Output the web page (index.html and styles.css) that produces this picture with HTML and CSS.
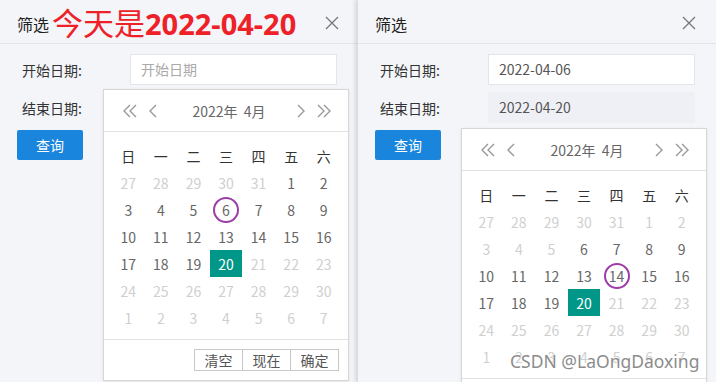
FILE: index.html
```html
<!DOCTYPE html>
<html lang="zh">
<head>
  <meta charset="UTF-8">
  <title>筛选</title>
  <link rel="stylesheet" href="styles.css">
</head>
<body>
  <div class="page">
    <!-- 左侧：选择开始日期 -->
    <section class="panel">
      <header class="panel-head">
        <span class="panel-title">筛选</span>
        <span class="today">今天是<b>2022-04-20</b></span>
        <span class="close">
          <svg width="14" height="14" viewBox="0 0 14 14"><path d="M1 1L13 13M13 1L1 13" stroke="#777" stroke-width="1.3" fill="none"/></svg>
        </span>
      </header>
      <div class="panel-body">
        <div class="form-row">
          <label>开始日期:</label>
          <div class="field placeholder">开始日期</div>
        </div>
        <div class="form-row">
          <label>结束日期:</label>
        </div>
        <button class="btn">查询</button>
      </div>

      <div class="laydate laydate-left">
        <div class="ld-head">
          <span class="ld-nav">
            <svg width="16" height="14" viewBox="0 0 16 14"><path d="M8 1L2 7L8 13M14 1L8 7L14 13" stroke="#999" stroke-width="1.4" fill="none"/></svg>
            <svg width="8" height="14" viewBox="0 0 8 14"><path d="M7 1L1 7L7 13" stroke="#999" stroke-width="1.4" fill="none"/></svg>
          </span>
          <span class="ld-title">2022年&nbsp;&nbsp;4月</span>
          <span class="ld-nav">
            <svg width="8" height="14" viewBox="0 0 8 14"><path d="M1 1L7 7L1 13" stroke="#999" stroke-width="1.4" fill="none"/></svg>
            <svg width="16" height="14" viewBox="0 0 16 14"><path d="M2 1L8 7L2 13M8 1L14 7L8 13" stroke="#999" stroke-width="1.4" fill="none"/></svg>
          </span>
        </div>
        <div class="ld-body">
          <div class="ld-grid">
            <span class="wk">日</span><span class="wk">一</span><span class="wk">二</span><span class="wk">三</span><span class="wk">四</span><span class="wk">五</span><span class="wk">六</span>
            <span class="off">27</span><span class="off">28</span><span class="off">29</span><span class="off">30</span><span class="off">31</span><span>1</span><span>2</span>
            <span>3</span><span>4</span><span>5</span><span class="mark">6</span><span>7</span><span>8</span><span>9</span>
            <span>10</span><span>11</span><span>12</span><span>13</span><span>14</span><span>15</span><span>16</span>
            <span>17</span><span>18</span><span>19</span><span class="on">20</span><span class="off">21</span><span class="off">22</span><span class="off">23</span>
            <span class="off">24</span><span class="off">25</span><span class="off">26</span><span class="off">27</span><span class="off">28</span><span class="off">29</span><span class="off">30</span>
            <span class="off">1</span><span class="off">2</span><span class="off">3</span><span class="off">4</span><span class="off">5</span><span class="off">6</span><span class="off">7</span>
          </div>
        </div>
        <div class="ld-foot">
          <div class="ld-btns"><span>清空</span><span>现在</span><span>确定</span></div>
        </div>
      </div>
    </section>

    <!-- 右侧：选择结束日期 -->
    <section class="panel panel-right">
      <header class="panel-head">
        <span class="panel-title">筛选</span>
        <span class="close">
          <svg width="14" height="14" viewBox="0 0 14 14"><path d="M1 1L13 13M13 1L1 13" stroke="#777" stroke-width="1.3" fill="none"/></svg>
        </span>
      </header>
      <div class="panel-body">
        <div class="form-row">
          <label>开始日期:</label>
          <div class="field">2022-04-06</div>
        </div>
        <div class="form-row">
          <label>结束日期:</label>
          <div class="field field-active">2022-04-20</div>
        </div>
        <button class="btn">查询</button>
      </div>

      <div class="laydate laydate-right">
        <div class="ld-head">
          <span class="ld-nav">
            <svg width="16" height="14" viewBox="0 0 16 14"><path d="M8 1L2 7L8 13M14 1L8 7L14 13" stroke="#999" stroke-width="1.4" fill="none"/></svg>
            <svg width="8" height="14" viewBox="0 0 8 14"><path d="M7 1L1 7L7 13" stroke="#999" stroke-width="1.4" fill="none"/></svg>
          </span>
          <span class="ld-title">2022年&nbsp;&nbsp;4月</span>
          <span class="ld-nav">
            <svg width="8" height="14" viewBox="0 0 8 14"><path d="M1 1L7 7L1 13" stroke="#999" stroke-width="1.4" fill="none"/></svg>
            <svg width="16" height="14" viewBox="0 0 16 14"><path d="M2 1L8 7L2 13M8 1L14 7L8 13" stroke="#999" stroke-width="1.4" fill="none"/></svg>
          </span>
        </div>
        <div class="ld-body">
          <div class="ld-grid">
            <span class="wk">日</span><span class="wk">一</span><span class="wk">二</span><span class="wk">三</span><span class="wk">四</span><span class="wk">五</span><span class="wk">六</span>
            <span class="off">27</span><span class="off">28</span><span class="off">29</span><span class="off">30</span><span class="off">31</span><span class="off">1</span><span class="off">2</span>
            <span class="off">3</span><span class="off">4</span><span class="off">5</span><span>6</span><span>7</span><span>8</span><span>9</span>
            <span>10</span><span>11</span><span>12</span><span>13</span><span class="mark">14</span><span>15</span><span>16</span>
            <span>17</span><span>18</span><span>19</span><span class="on">20</span><span class="off">21</span><span class="off">22</span><span class="off">23</span>
            <span class="off">24</span><span class="off">25</span><span class="off">26</span><span class="off">27</span><span class="off">28</span><span class="off">29</span><span class="off">30</span>
            <span class="off">1</span><span class="off">2</span><span class="off">3</span><span class="off">4</span><span class="off">5</span><span class="off">6</span><span class="off">7</span>
          </div>
        </div>
        <div class="ld-foot"></div>
      </div>

      <div class="watermark">CSDN @LaOngDaoxing</div>
    </section>
  </div>
</body>
</html>
```

FILE: styles.css
```css
html, body {
  margin: 0;
  padding: 0;
  height: 100%;
  overflow: hidden;
}

body {
  font-family: "Noto Sans CJK SC", "Noto Sans", sans-serif;
  font-size: 14px;
  color: #333;
  background: #f4f5f9;
}

.page {
  display: flex;
  height: 382px;
}

.panel {
  position: relative;
  width: 357px;
  background: #f4f5f9;
}

.panel-right {
  width: 359px;
  box-shadow: -2px 0 4px rgba(0, 0, 0, 0.12);
  border-left: 1px solid #dcdde2;
  box-sizing: border-box;
}

.panel-head {
  display: flex;
  align-items: center;
  height: 44px;
  padding: 0 18px 0 17px;
  border-bottom: 1px solid #e3e5eb;
  box-sizing: border-box;
}

.panel-title {
  font-size: 16px;
  color: #222;
  line-height: 1;
  padding-top: 4px;
}

.today {
  color: #ee2128;
  font-size: 31px;
  line-height: 1;
  margin-left: 3px;
}

.today b {
  font-size: 29px;
  font-weight: bold;
  font-family: "Noto Sans", sans-serif;
}

.close {
  margin-left: auto;
  display: flex;
  padding-top: 2px;
}

.panel-right .close {
  padding-right: 2px;
}

.panel-body {
  padding: 10px 0 0 17px;
}

.form-row {
  display: flex;
  align-items: center;
  height: 31px;
  margin-bottom: 7px;
}

.form-row label {
  width: 108px;
  padding-left: 5px;
  font-size: 14px;
  color: #333;
}

.field {
  width: 207px;
  height: 31px;
  box-sizing: border-box;
  border: 1px solid #e2e5ee;
  background: #fff;
  padding-left: 10px;
  line-height: 29px;
  font-size: 14px;
  color: #555;
}

.field.placeholder {
  color: #aaa;
}

.field-active {
  background: #eef0f6;
  border-color: #eef0f6;
}

.btn {
  display: block;
  width: 66px;
  height: 30px;
  margin-top: 1px;
  border: none;
  border-radius: 2px;
  background: #1a85dc;
  color: #fff;
  font-family: "Noto Sans CJK SC", sans-serif;
  font-size: 14px;
  cursor: pointer;
}

/* 日期选择弹层 */
.laydate {
  position: absolute;
  left: 103px;
  width: 246px;
  background: #fff;
  border: 1px solid #d6d6d6;
  box-sizing: border-box;
  box-shadow: 0 1px 3px rgba(0, 0, 0, 0.08);
}

.laydate-left {
  top: 89px;
}

.laydate-right {
  top: 128px;
}

.ld-head {
  display: flex;
  align-items: center;
  justify-content: space-between;
  height: 41px;
  padding: 0 16px 0 18px;
  border-bottom: 1px solid #e2e2e2;
}

.ld-nav {
  display: flex;
  align-items: center;
  gap: 11px;
}

.ld-title {
  color: #666;
  font-size: 14px;
  padding-left: 4px;
}

.ld-body {
  padding: 10px 8px 8px;
}

.ld-grid {
  display: grid;
  grid-template-columns: repeat(7, 1fr);
  grid-auto-rows: 27px;
}

.ld-grid span {
  position: relative;
  display: flex;
  align-items: center;
  justify-content: center;
  color: #666;
  font-size: 14px;
}

.ld-grid .wk {
  color: #333;
}

.ld-grid .off {
  color: #cfcfcf;
}

.ld-grid .on {
  background: #009688;
  color: #fff;
}

.ld-grid .mark::after {
  content: "";
  position: absolute;
  left: 50%;
  top: 50%;
  width: 22px;
  height: 22px;
  margin: -13px 0 0 -13px;
  border: 2px solid #9d3ea8;
  border-radius: 50%;
}

.ld-foot {
  height: 40px;
  border-top: 1px solid #e2e2e2;
  display: flex;
  align-items: center;
  justify-content: flex-end;
  padding-right: 9px;
}

.ld-btns {
  display: flex;
}

.ld-btns span {
  width: 49px;
  height: 22px;
  box-sizing: border-box;
  border: 1px solid #c9c9c9;
  margin-left: -1px;
  display: flex;
  align-items: center;
  justify-content: center;
  color: #555;
  font-size: 14px;
}

.watermark {
  position: absolute;
  left: 152px;
  top: 349px;
  font-family: "Noto Sans", sans-serif;
  font-size: 17.5px;
  color: #8c8c8c;
  text-shadow: 0 0 2px #fff;
}
```
